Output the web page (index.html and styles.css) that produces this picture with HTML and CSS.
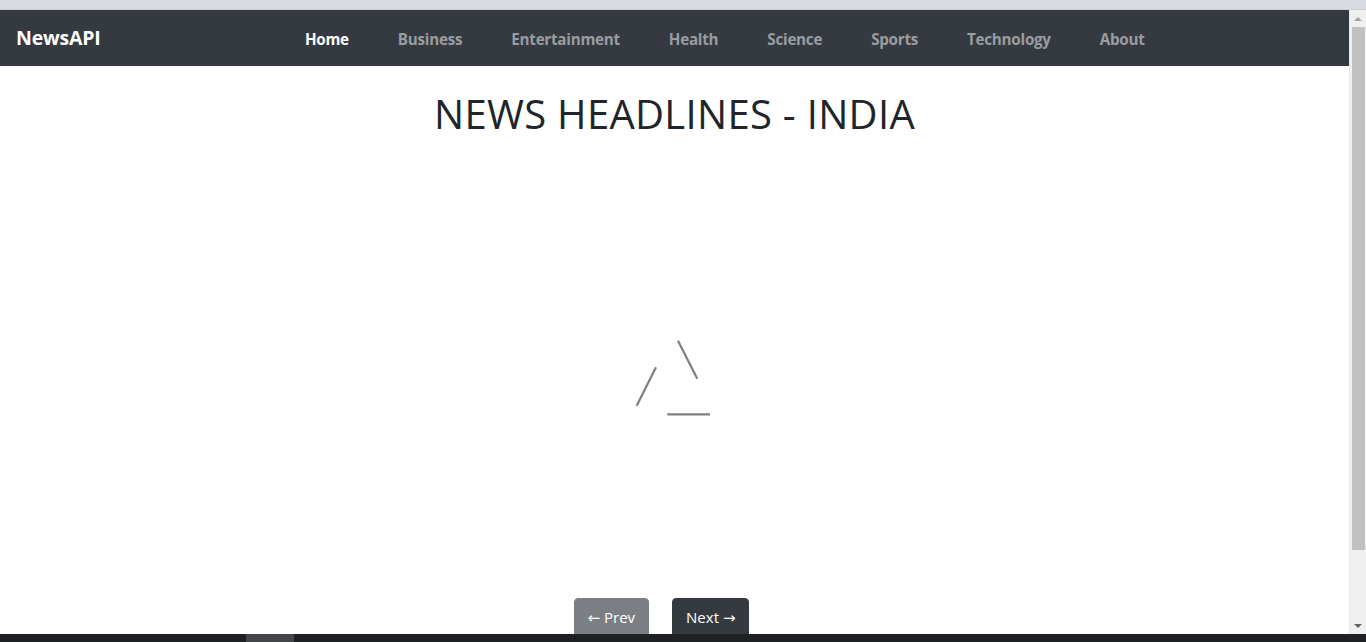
FILE: index.html
```html
<!DOCTYPE html>
<html lang="en">
<head>
<meta charset="utf-8">
<title>NewsAPI</title>
<link rel="stylesheet" href="styles.css">
</head>
<body>
<div class="chrome-top"></div>
<div class="window">
  <div class="page">
    <nav class="navbar">
      <a class="brand" href="#">NewsAPI</a>
      <div class="nav-wrap">
        <ul class="nav">
          <li><a class="nav-link active" href="#">Home</a></li>
          <li><a class="nav-link" href="#">Business</a></li>
          <li><a class="nav-link" href="#">Entertainment</a></li>
          <li><a class="nav-link" href="#">Health</a></li>
          <li><a class="nav-link" href="#">Science</a></li>
          <li><a class="nav-link" href="#">Sports</a></li>
          <li><a class="nav-link" href="#">Technology</a></li>
          <li><a class="nav-link" href="#">About</a></li>
        </ul>
      </div>
    </nav>
    <h1 class="title">NEWS HEADLINES - INDIA</h1>
    <div class="loader">
      <svg width="80" height="80" viewBox="0 0 80 80" aria-hidden="true">
        <line x1="3.7" y1="66.7" x2="23" y2="28.3" stroke="#7f7f7f" stroke-width="2.2"/>
        <line x1="45" y1="1.7" x2="64.3" y2="39.7" stroke="#7f7f7f" stroke-width="2.2"/>
        <line x1="34.3" y1="75.3" x2="77" y2="75.3" stroke="#7f7f7f" stroke-width="2.2"/>
      </svg>
    </div>
    <div class="pager">
      <button class="btn btn-disabled" disabled><span class="arr">&larr;</span> Prev</button>
      <button class="btn">Next <span class="arr">&rarr;</span></button>
    </div>
  </div>
  <div class="scrollbar">
    <div class="arrow up"></div>
    <div class="track"><div class="thumb"></div></div>
    <div class="arrow down"></div>
  </div>
</div>
<div class="taskbar"><div class="task-item"></div></div>
</body>
</html>
```
FILE: styles.css
```css
* { box-sizing: border-box; }
html, body { margin: 0; padding: 0; height: 642px; overflow: hidden; }
body {
  font-family: "Open Sans", "Noto Sans", "Liberation Sans", sans-serif;
  color: #212529;
  background: #fff;
  display: flex;
  flex-direction: column;
}
.chrome-top { height: 10px; background: #d9dadf; border-bottom: 1px solid #cfd0d4; flex: none; }
.window { display: flex; height: 624px; flex: none; }
.page { width: 1349px; overflow: hidden; display: flex; flex-direction: column; background: #fff; }

.navbar {
  height: 56px;
  background: #343a40;
  display: flex;
  align-items: center;
  padding: 0 16px;
  flex: none;
}
.brand {
  color: #fff;
  font-weight: 700;
  font-size: 19.5px;
  letter-spacing: -0.2px;
  text-decoration: none;
  margin-right: 16px;
  line-height: 30px;
}
.nav-wrap { flex: 1; display: flex; justify-content: center; }
.nav { list-style: none; margin: 0; padding: 0; display: flex; gap: 49px; }
.nav-link {
  display: block;
  color: #9a9da0;
  font-weight: 700;
  font-size: 15.2px;
  letter-spacing: -0.25px;
  text-decoration: none;
  line-height: 24px;
  padding-top: 1px;
}
.nav-link.active { color: #fff; }

.title {
  margin: 24px 0 0;
  text-align: center;
  font-weight: 500;
  font-size: 40px;
  line-height: 48px;
  letter-spacing: 0.3px;
  color: #212529;
}
.loader { display: flex; justify-content: center; margin-top: 201px; padding-right: 4px; }
.loader svg { display: block; }

.pager { display: flex; justify-content: center; gap: 23px; margin-top: 179px; padding-right: 26px; }
.btn {
  font-family: inherit;
  font-size: 15px;
  line-height: 24px;
  padding: 6px 13px;
  border: 1px solid #343a40;
  border-radius: 4px;
  background: #343a40;
  color: #fff;
}
.btn .arr { font-family: "DejaVu Sans", sans-serif; font-size: 15px; }
.btn-disabled { background: #7b7f83; border-color: #7b7f83; }

.scrollbar { width: 17px; background: #f0f0f0; display: flex; flex-direction: column; align-items: center; border-left: 1px solid #e8e8e8; }
.arrow { height: 17px; width: 15px; display: flex; justify-content: center; align-items: center; flex: none; }
.arrow::after { content: ""; border-left: 4px solid transparent; border-right: 4px solid transparent; }
.arrow.up::after { border-bottom: 4px solid #a3a3a3; }
.arrow.down::after { border-top: 4px solid #606060; }
.track { flex: 1; width: 100%; display: flex; justify-content: center; }
.thumb { width: 13px; height: 523px; background: #c1c1c1; }

.taskbar { height: 8px; background: #1f2023; flex: none; padding-left: 246px; }
.task-item { width: 48px; height: 8px; background: #444548; }
```
